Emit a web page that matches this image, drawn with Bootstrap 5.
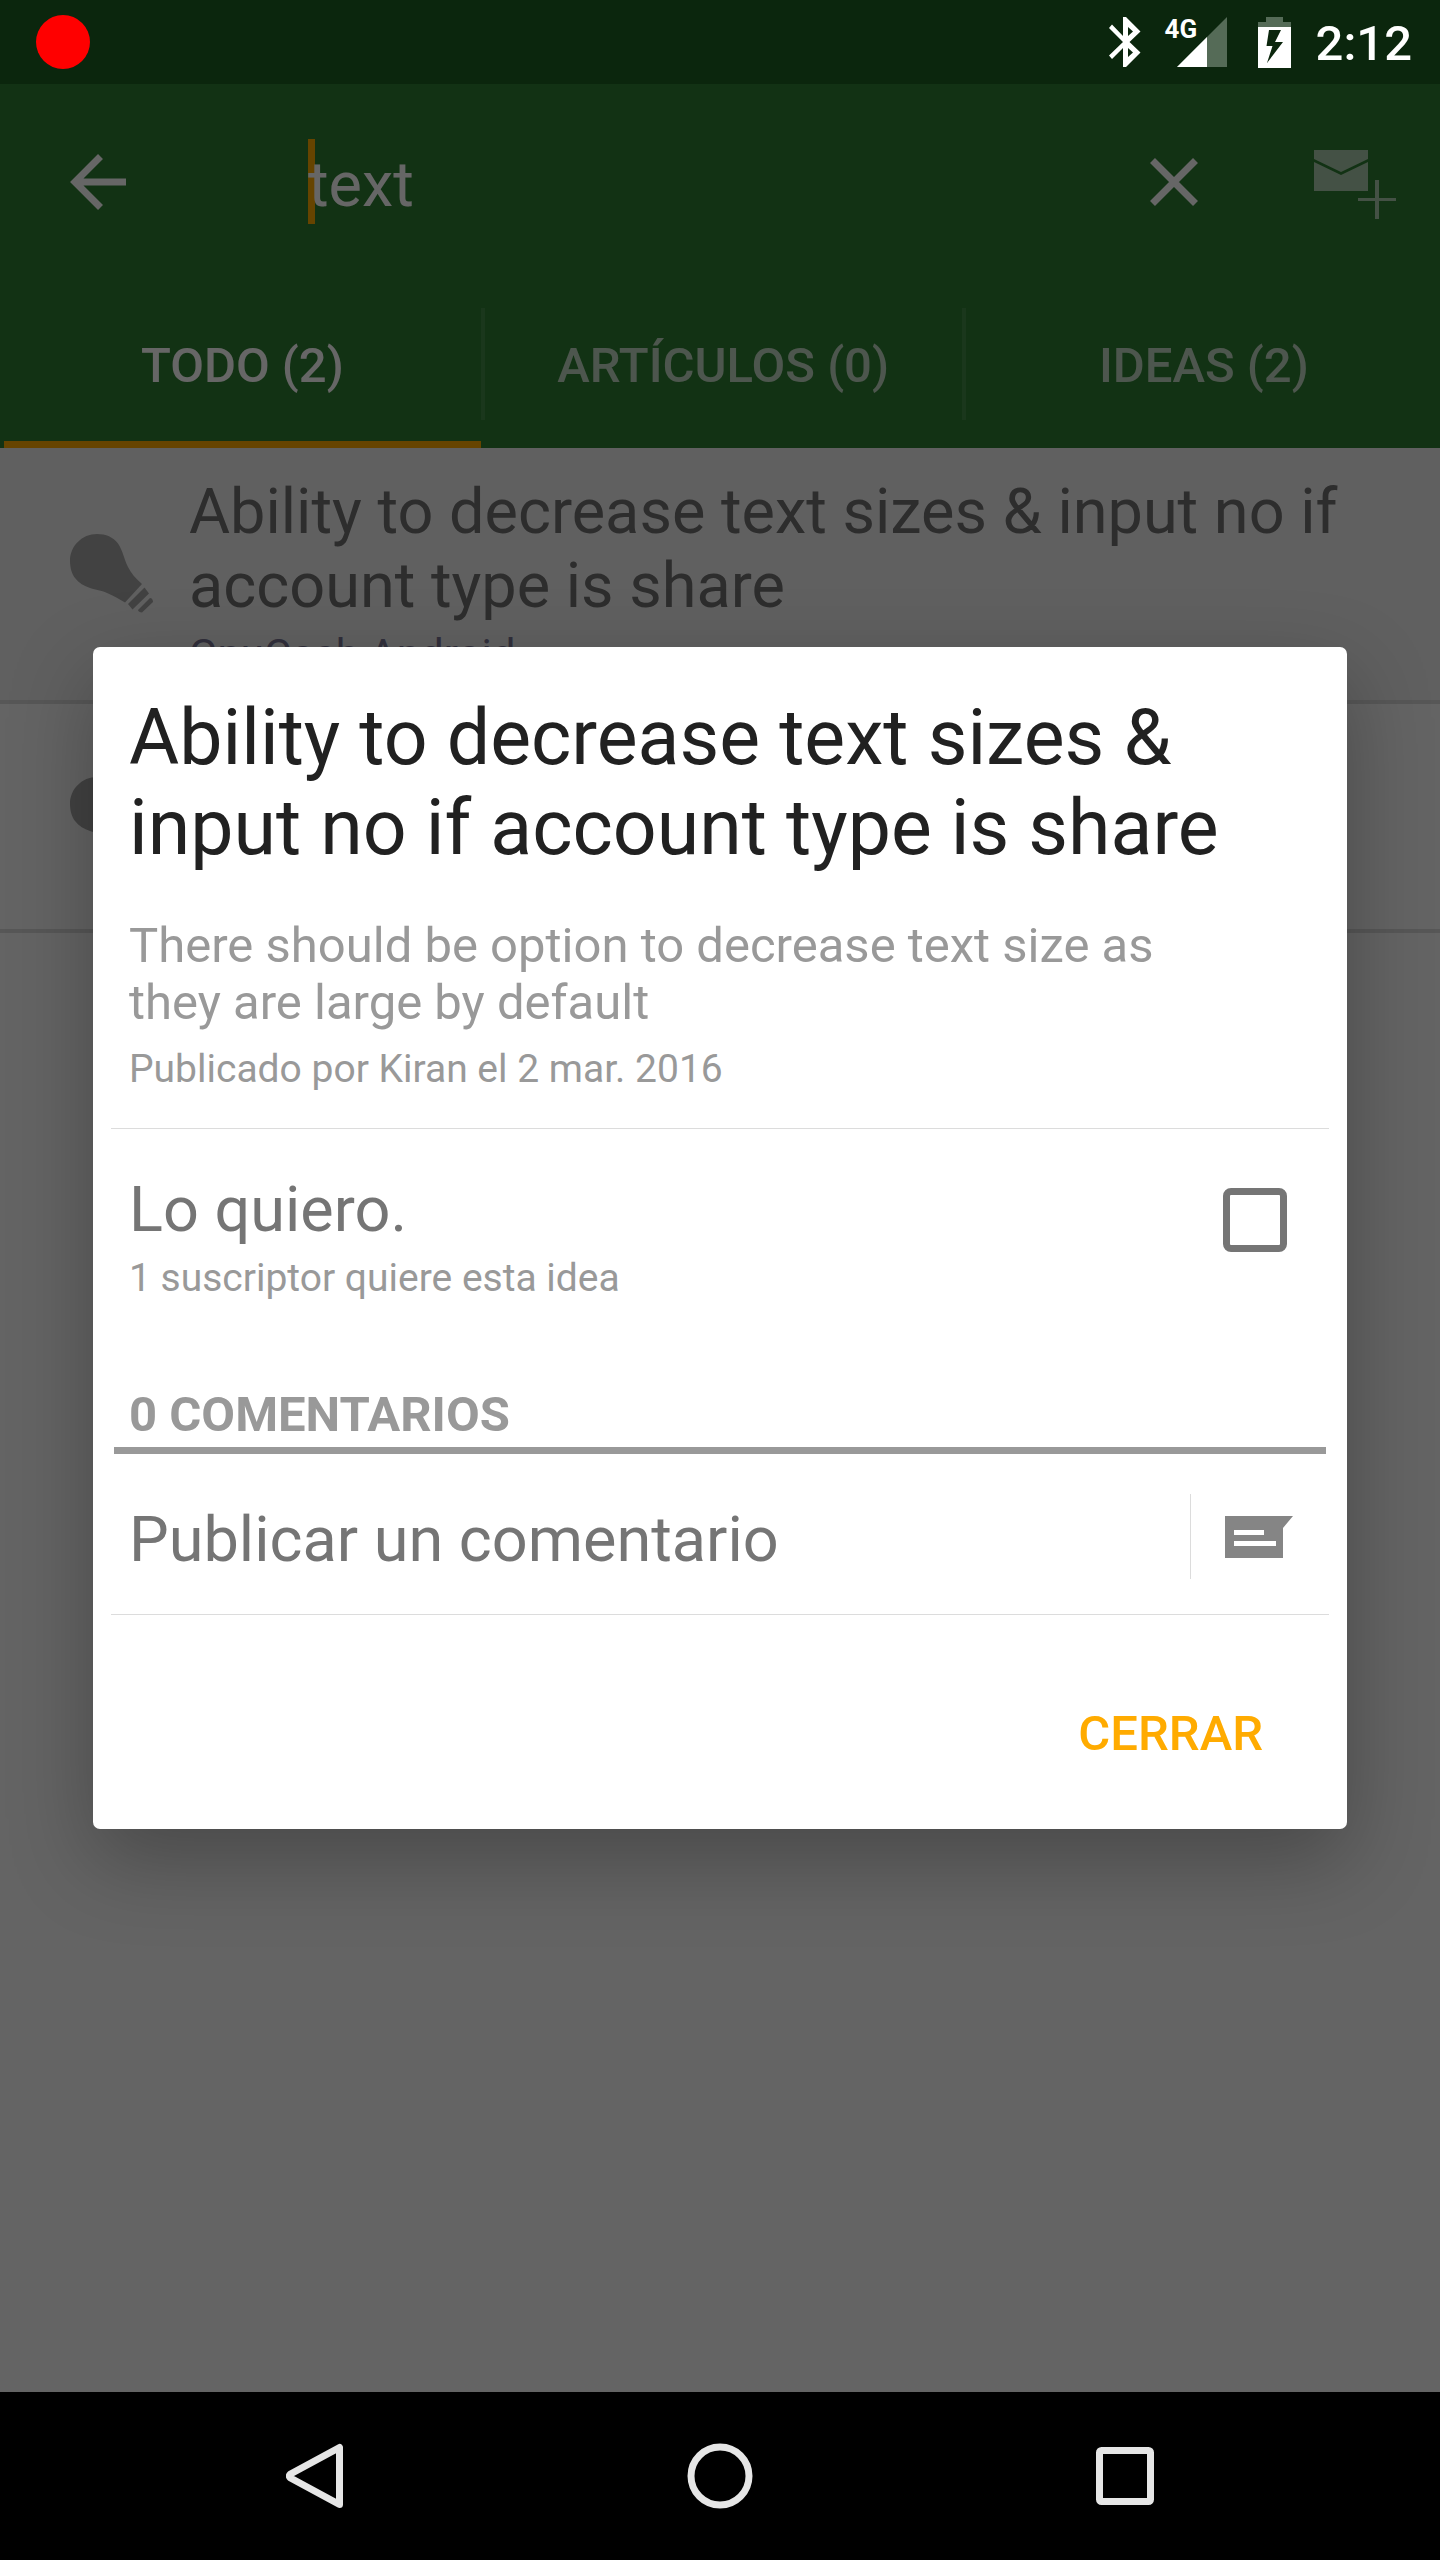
<!DOCTYPE html>
<html lang="es">
<head>
<meta charset="utf-8">
<meta name="viewport" content="width=device-width, initial-scale=1">
<title>Buscar ideas</title>
<link href="https://cdn.jsdelivr.net/npm/bootstrap@5.3.0/dist/css/bootstrap.min.css" rel="stylesheet">
<style>
  body { font-family: Roboto, "Noto Sans", sans-serif; background: #000; line-height: 1.172; }
  svg { display: block; flex: none; }
  button { font-family: inherit; }

  /* type scale */
  .t-headline { font-size: 77px; line-height: 90px; font-weight: 400; color: #212121; }
  .t-title { font-size: 63px; line-height: 74px; font-weight: 400; }
  .t-body { font-size: 49px; line-height: 57px; }
  .t-caption { font-size: 39px; line-height: 46px; }
  .t-medium { font-weight: 500; }
  .c-secondary { color: #757575; }
  .c-hint { color: #999; }

  .statusbar { height: 84px; background: #0b260d; padding: 0 28px 0 36px; color: #fff; }
  .statusbar .t-body { padding-top: 2px; }
  .rec-dot { width: 54px; height: 54px; background: #f00; }
  .signal { width: 63px; height: 50px; }
  .signal-label { left: 0; top: -2px; font-size: 26px; line-height: 28px; font-weight: 700; }
  .battery { margin: 0 25px 0 30px; }

  .appbar { background: #2e7d32; color: #fff; }
  .searchbar { height: 196px; padding: 0 44px 0 70px; }
  .searchfield { margin-left: 182px; }
  .searchfield input { background: transparent; border: 0; outline: 0; padding: 4px 0 0; color: #fff; height: 78px; width: 100%; position: relative; }
  .caret { left: 0; top: -4px; width: 7px; height: 85px; background: #ffab00; }
  .tool-gap { margin: 4px 0 0 116px; }

  .tabrow { height: 168px; padding-left: 4px; overflow: hidden; }
  .tabrow .nav-link { flex: 0 0 calc(33.34% - 2px); display: flex; align-items: center; justify-content: center; padding: 10px 0 0; color: rgba(255,255,255,.7); border-radius: 0; border-bottom: 7px solid transparent; }
  .tabrow .nav-link.active { color: #fff; border-color: #ffab00; }
  .tab-rule { flex: none; width: 4px; height: 112px; background: rgba(255,255,255,.1); }

  .content { background: #fafafa; }
  .result { border-bottom: 4px solid #d9d9d9; padding: 0 70px; min-height: 229px; }
  .result-read { background: #f0f0f0; min-height: 256px; }
  .result-text { margin-left: 35px; padding-top: 6px; color: #707070; }
  .result-forum { font-size: 42px; line-height: 49px; margin-top: 7px; color: #7a7594; }

  .scrim { inset: 0; background: rgba(0,0,0,.6); }
  .idea-dialog { margin: 0 93px; border-radius: 7px; box-shadow: 0 30px 84px rgba(0,0,0,.28); }
  .idea-intro { padding: 46px 36px 36px; }
  .idea-desc { margin: 44px 70px 15px 0; }
  .rule { height: 1px; margin: 0 18px; background: #dcdcdc; }
  .want-row { padding: 44px 60px 0 36px; }
  .want-row input { appearance: none; width: 64px; height: 64px; margin: 15px 0 0; border: 7px solid #757575; border-radius: 8px; background: #fff; }
  .comments-head { margin: 85px 21px 0; padding: 0 15px 4px; border-bottom: 7px solid #999; font-weight: 700; }
  .comment-btn { padding: 40px 54px 35px 36px; border: 0; background: none; text-align: left; }
  .comment-btn .comment-label { padding-top: 6px; }
  .comment-rule { width: 1px; height: 85px; margin-right: 34px; background: #dcdcdc; }
  .dialog-actions { padding: 90px 84px 67px; }
  .dialog-actions button { color: #ffab00; background: none; border: 0; padding: 0; }

  .navkeys { height: 168px; background: #000; }
  .navkeys button { width: 28.125%; background: none; border: 0; padding: 0; display: flex; justify-content: center; }
</style>
</head>
<body>
<div class="d-flex flex-column min-vh-100">

  <div class="statusbar d-flex align-items-center">
    <span class="rec-dot rounded-circle me-auto"></span>
    <svg width="32" height="50" viewBox="0 0 32 50" fill="#fff" class="me-4"><path d="M14 0h3l14.500 14.500L20.500 25l11 10.500L17 50h-3V31L3 42l-3-3.500L14 25 0 11l3-3.500L14 19zM19 10v9l5-4.500zM19 31v9l5-4.500z" fill-rule="evenodd"/></svg>
    <div class="signal position-relative">
      <svg width="62" height="50" viewBox="0 0 62 50"><path d="M62 0v50H12z" fill="#556b57"/><path d="M42 20v30H12z" fill="#fff"/></svg>
      <span class="signal-label position-absolute">4G</span>
    </div>
    <svg class="battery" width="33" height="51" viewBox="0 0 33 51"><path d="M8 0h17v5h8v5H0V5h8z" fill="#556b57"/><path d="M0 10h33v41H0zM11 13L8.500 29h6L9 46l16-21h-8l6-12z" fill="#fff" fill-rule="evenodd"/></svg>
    <span class="t-body t-medium">2:12</span>
  </div>

  <div class="position-relative flex-grow-1 d-flex flex-column">
    <header class="appbar">
      <div class="searchbar d-flex align-items-center">
        <button class="btn p-0 border-0" aria-label="Atrás"><svg width="56" height="56" viewBox="0 0 56 56" fill="none" stroke="#fff" stroke-width="7"><path d="M30.500 2.500L5 28l25.500 25.500M8 28h48"/></svg></button>
        <div class="searchfield position-relative flex-grow-1">
          <span class="caret position-absolute"></span>
          <input class="t-title" type="text" value="text" aria-label="Buscar">
        </div>
        <button class="btn p-0 border-0" aria-label="Borrar"><svg width="48" height="48" viewBox="0 0 48 48" fill="none" stroke="#fff" stroke-width="7"><path d="M2.500 2.500l43 43M45.500 2.500l-43 43"/></svg></button>
        <button class="btn p-0 border-0 tool-gap" aria-label="Nuevo mensaje"><svg width="82" height="69" viewBox="0 0 82 69" fill="#fff" fill-opacity=".6"><path d="M0 0h54v9L27 22 0 9zM0 12l27 13 27-13v29H0z"/><path d="M61 30h4v18h17v3H65v18h-4V51H44v-3h17z"/></svg></button>
      </div>
      <nav class="tabrow nav flex-nowrap align-items-center t-body t-medium">
        <a class="nav-link active h-100" href="#todo">TODO (2)</a>
        <span class="tab-rule"></span>
        <a class="nav-link h-100" href="#articulos">ARTÍCULOS (0)</a>
        <span class="tab-rule"></span>
        <a class="nav-link h-100" href="#ideas">IDEAS (2)</a>
      </nav>
    </header>

    <main class="content flex-grow-1">
      <div class="result result-read d-flex align-items-center">
        <svg width="84" height="80" viewBox="0 0 84 80" fill="#a5a5a5"><path id="bulb" d="M27 0C12 0 0 12 0 27c0 7 2 13 5 17 4 5 9 8 15 10 6 2 11 2 17 5 7 3 12 6 18 9.500L72 50c-6-5-11-11-14-17-4-8-5-16-10-23.500C43 3 36 0 27 0zM58 70l16.500-16.500 4.500 6L62.500 75.500zM68 76l12-12c2 0 3 2 3 4L72 78.500c-2 0-4-1-4-2.500z"/></svg>
        <div class="result-text">
          <div class="t-title">Ability to decrease text sizes &amp; input no if account type is share</div>
          <div class="result-forum">GnuCash Android</div>
        </div>
      </div>
      <div class="result d-flex align-items-center">
        <svg width="84" height="80" viewBox="0 0 84 80" fill="#a5a5a5"><use href="#bulb"/></svg>
      </div>
    </main>

    <div class="scrim position-absolute d-flex align-items-center">
      <div class="idea-dialog bg-white flex-grow-1" role="dialog" aria-labelledby="idea-title">
        <div class="idea-intro">
          <h1 class="t-headline m-0" id="idea-title">Ability to decrease text sizes &amp; input no if account type is share</h1>
          <p class="idea-desc t-body c-hint">There should be option to decrease text size as they are large by default</p>
          <p class="t-caption c-hint m-0">Publicado por Kiran el 2 mar. 2016</p>
        </div>
        <div class="rule"></div>
        <div class="want-row d-flex justify-content-between align-items-start">
          <label for="want">
            <span class="d-block t-title c-secondary mb-2">Lo quiero.</span>
            <span class="d-block t-caption c-hint">1 suscriptor quiere esta idea</span>
          </label>
          <input type="checkbox" id="want">
        </div>
        <div class="comments-head t-body c-hint">0 COMENTARIOS</div>
        <button class="comment-btn w-100 d-flex align-items-center">
          <span class="comment-label t-title c-secondary flex-grow-1">Publicar un comentario</span>
          <span class="comment-rule"></span>
          <svg width="68" height="42" viewBox="0 0 68 42"><path d="M0 0h68L58 12v30H0z" fill="#858585"/><path d="M9 14h30v5H9zM9 25h42v5H9z" fill="#fff"/></svg>
        </button>
        <div class="rule"></div>
        <div class="dialog-actions d-flex justify-content-end">
          <button class="t-body t-medium">CERRAR</button>
        </div>
      </div>
    </div>
  </div>

  <div class="navkeys d-flex justify-content-center align-items-center">
    <button aria-label="Atrás"><svg width="58" height="66" viewBox="0 0 58 66" fill="none" stroke="#e6e6e6" stroke-width="7" stroke-linejoin="round"><path d="M53.500 4.500v57L4.500 35q-2-2 0-4z"/></svg></button>
    <button aria-label="Inicio"><svg width="66" height="66" viewBox="0 0 66 66" fill="none" stroke="#e6e6e6" stroke-width="7"><circle cx="33" cy="33" r="29"/></svg></button>
    <button aria-label="Recientes"><svg width="58" height="58" viewBox="0 0 58 58" fill="none" stroke="#e6e6e6" stroke-width="7"><rect x="3.500" y="3.500" width="51" height="51" rx="2"/></svg></button>
  </div>
</div>
<script src="https://cdn.jsdelivr.net/npm/bootstrap@5.3.0/dist/js/bootstrap.bundle.min.js"></script>
</body>
</html>
